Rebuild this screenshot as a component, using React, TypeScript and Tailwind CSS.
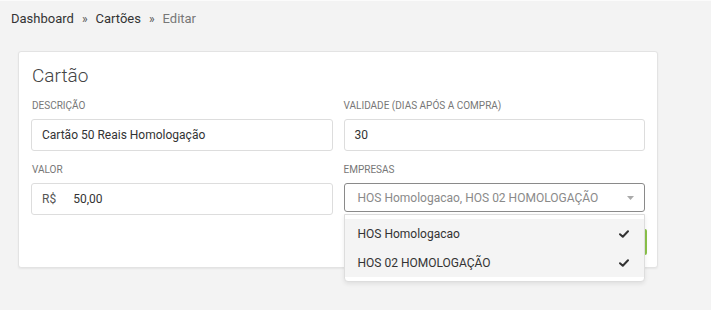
import React from "react";

function Check() {
  return (
    <svg width="10" height="8" viewBox="0 0 10 8" className="block">
      <path d="M1 4.2 L3.8 6.8 L9 1.3" fill="none" stroke="#333" strokeWidth="2" strokeLinecap="round" strokeLinejoin="round" />
    </svg>
  );
}

export default function App() {
  return (
    <div className="min-h-[310px] w-[711px] bg-[#f3f3f3] border-t border-[#fbfbfb] font-['Roboto',sans-serif] text-[#333]">
      <div className="flex items-center h-[36px] pl-[11px] text-[13px]">
        <span className="text-[#333]">Dashboard</span>
        <span className="mx-[8px] text-[#555] text-[12px]">»</span>
        <span className="text-[#333]">Cartões</span>
        <span className="mx-[8px] text-[#555] text-[12px]">»</span>
        <span className="text-[#777]">Editar</span>
      </div>
      <div className="pl-[18px] pr-[53px] pt-[14px]">
        <div className="bg-white border border-[#e3e3e3] rounded-[3px] shadow-[0_1px_2px_rgba(0,0,0,0.06)] px-[12px] pt-[12px] pb-[12px]">
          <div className="text-[19px] font-light text-[#444] leading-[24px] ml-[1px]">Cartão</div>
          <div className="grid grid-cols-2 gap-x-[11px] mt-[12px]">
            <div>
              <div className="text-[10px] text-[#777] leading-[12px] ml-[1px]">DESCRIÇÃO</div>
              <div className="mt-[7px] h-[32px] border border-[#ddd] rounded-[3px] flex items-center px-[10px] text-[12px] text-[#333]">
                Cartão 50 Reais Homologação
              </div>
            </div>
            <div>
              <div className="text-[10px] text-[#777] leading-[12px]">VALIDADE (DIAS APÓS A COMPRA)</div>
              <div className="mt-[7px] h-[32px] border border-[#ddd] rounded-[3px] flex items-center px-[10px] text-[12px] text-[#333]">
                30
              </div>
            </div>
            <div className="mt-[13px]">
              <div className="text-[10px] text-[#777] leading-[12px] ml-[1px]">VALOR</div>
              <div className="mt-[7px] h-[32px] border border-[#ddd] rounded-[3px] flex items-center px-[10px] text-[12px] text-[#333]">
                <span className="text-[#555]">R$</span>
                <span className="ml-[17px]">50,00</span>
              </div>
            </div>
            <div className="mt-[13px] relative">
              <div className="text-[10px] text-[#777] leading-[12px]">EMPRESAS</div>
              <div className="mt-[7px] h-[29px] border border-[#8a8a8a] rounded-[3px] flex items-center justify-between pl-[13px] pr-[10px] text-[12px] text-[#8a8a8a]">
                <span>HOS Homologacao, HOS 02 HOMOLOGAÇÃO</span>
                <svg width="7" height="4" viewBox="0 0 7 4"><path d="M0 0 L7 0 L3.5 4 Z" fill="#aaa" /></svg>
              </div>
              <div className="absolute left-0 right-0 top-[50px] z-10 bg-white border border-[#ddd] rounded-b-[4px] shadow-[0_2px_4px_rgba(0,0,0,0.08)] pt-[4px] pb-[4px]">
                <div className="h-[29px] bg-[#f4f4f4] flex items-center justify-between pl-[13px] pr-[15px] text-[12px] text-[#333]">
                  <span>HOS Homologacao</span>
                  <Check />
                </div>
                <div className="h-[29px] bg-[#f4f4f4] flex items-center justify-between pl-[13px] pr-[15px] text-[12px] text-[#333]">
                  <span>HOS 02 HOMOLOGAÇÃO</span>
                  <Check />
                </div>
              </div>
            </div>
          </div>
          <div className="flex justify-end mt-[14px] -mr-[2px]">
            <div className="h-[26px] w-[70px] bg-[#8bc34a] rounded-[2px]" />
          </div>
        </div>
      </div>
    </div>
  );
}
